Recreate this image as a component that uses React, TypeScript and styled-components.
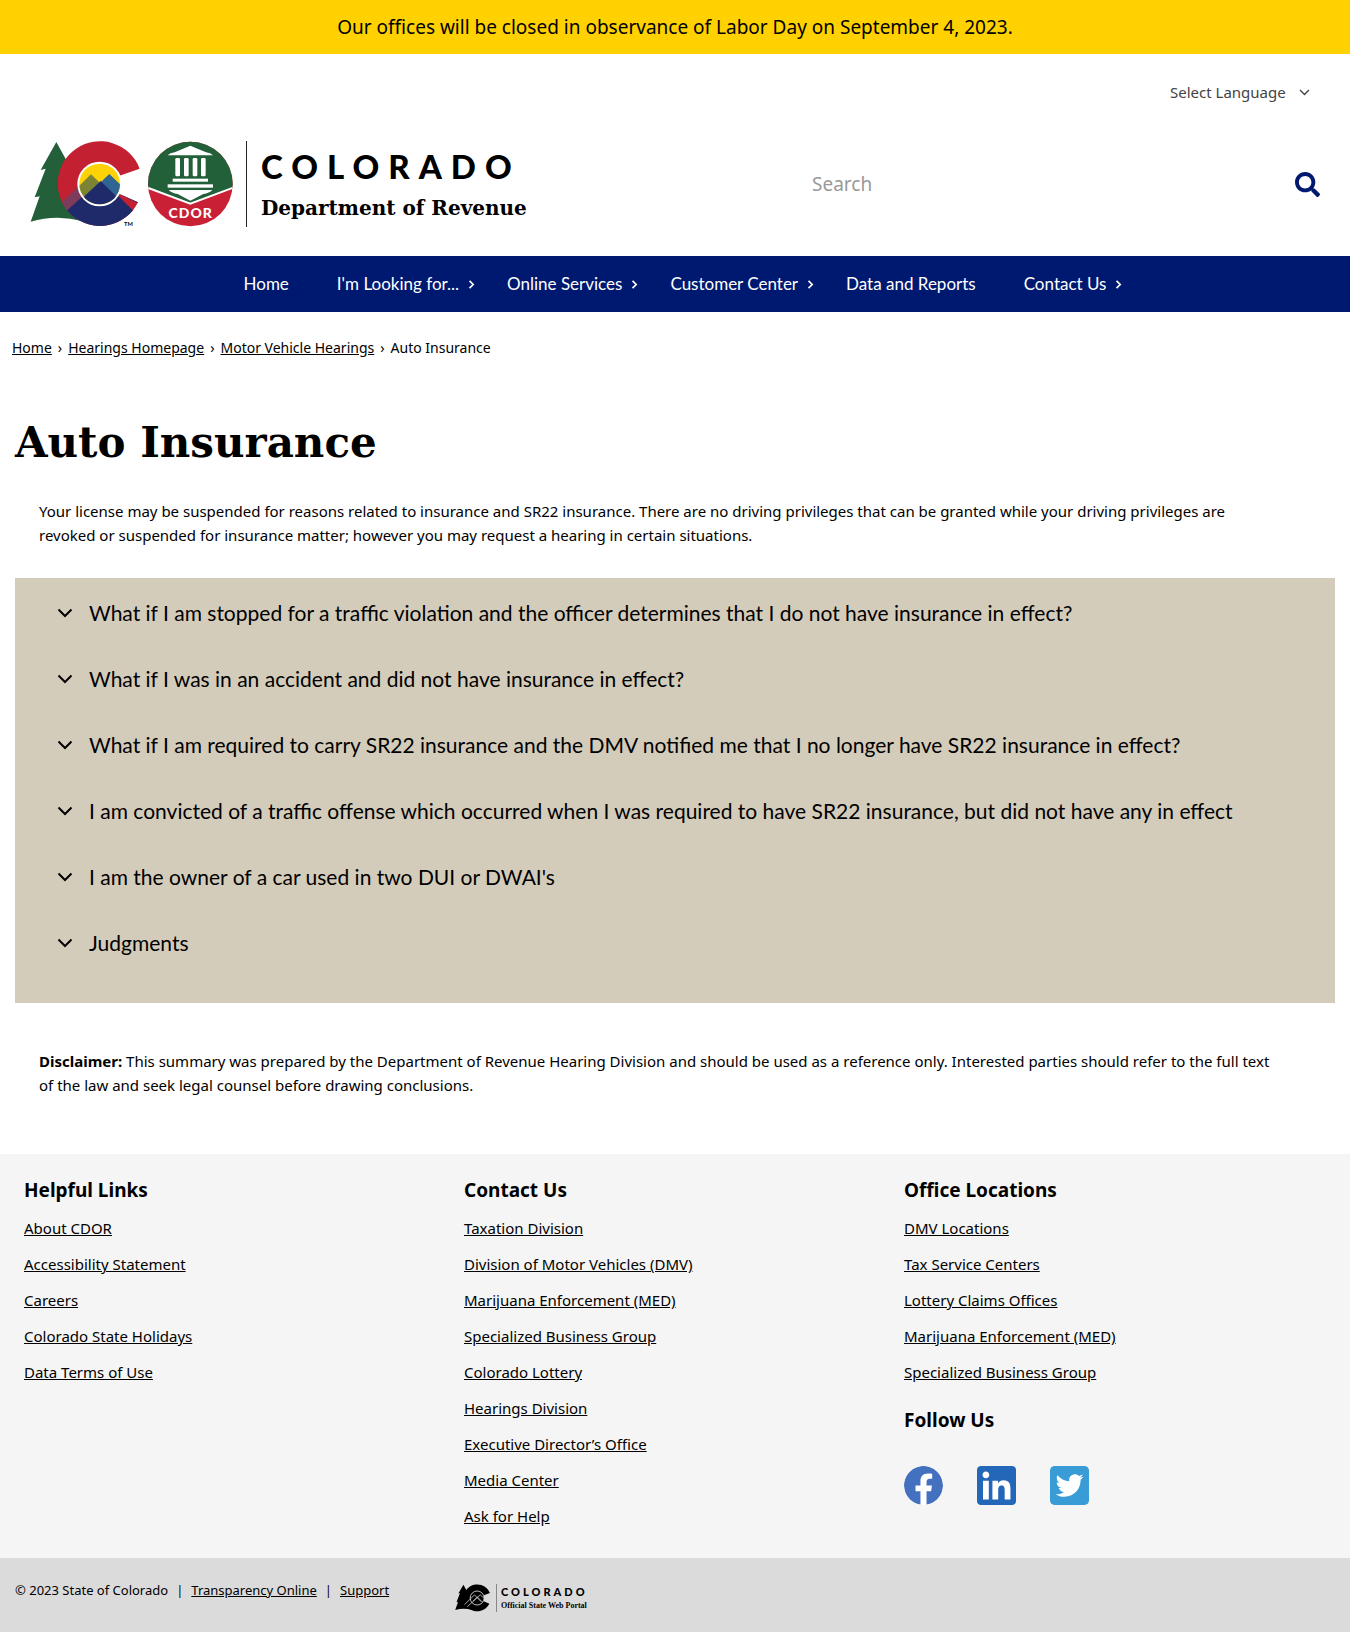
import React from 'react';
import styled, { createGlobalStyle } from 'styled-components';
import { FaFacebook, FaLinkedin, FaSearch, FaTwitterSquare } from 'react-icons/fa';

const body = `'Noto Sans', 'Open Sans', sans-serif`;
const museo = `Lato, 'Open Sans', sans-serif`;
const slab = `'DejaVu Serif', 'Liberation Serif', serif`;
const navy = '#001970';

const GlobalStyle = createGlobalStyle`
  *, *::before, *::after { box-sizing: border-box; }
  body { margin: 0; background: #fff; color: #000; font: 15px/24px ${body}; }
  h1, h2, p, ul, ol { margin: 0; padding: 0; }
  ul, ol { list-style: none; }
  a { color: inherit; }
  button { font: inherit; color: inherit; background: none; border: 0; padding: 0; cursor: pointer; }
`;

const Banner = styled.div`
  background: #ffd100;
  padding: 13px 16px;
  font-size: 19px;
  line-height: 28px;
  text-align: center;
`;

const Header = styled.header`
  padding: 27px 30px 29px;
`;

const LanguageRow = styled.div`
  display: flex;
  justify-content: flex-end;
  padding-right: 10px;
  margin-bottom: 38px;
`;

const LanguagePicker = styled.label`
  display: grid;
  align-items: center;
  justify-items: end;
  color: #444;

  & > * {
    grid-area: 1 / 1;
  }
  svg {
    pointer-events: none;
  }
`;

const LanguageSelect = styled.select`
  appearance: none;
  height: 22px;
  padding: 0 24px 0 0;
  border: 0;
  background: none;
  color: inherit;
  font: 15px/22px ${body};
`;

const BrandRow = styled.div`
  display: grid;
  grid-template-columns: 3fr 2fr;
  align-items: center;
`;

const Brand = styled.a`
  display: flex;
  align-items: stretch;
  gap: 12px;
  text-decoration: none;
`;

const BrandText = styled.span`
  display: flex;
  flex-direction: column;
  justify-content: center;
  gap: 8px;
  padding-left: 14px;
  border-left: 1px solid #222;
`;

const BrandState = styled.span`
  font: 900 33px/40px ${museo};
  letter-spacing: 9px;
`;

const BrandName = styled.span`
  font: 700 20px/28px ${slab};
`;

const SearchForm = styled.form`
  display: flex;
  align-items: center;
  padding-left: 8px;
`;

const SearchInput = styled.input`
  flex: 1;
  min-width: 0;
  height: 40px;
  padding: 0;
  border: 0;
  background: none;
  font: 19px/28px ${body};

  &::placeholder {
    color: #999;
    opacity: 1;
  }
`;

const SearchButton = styled.button`
  display: flex;
  && {
    color: ${navy};
    font-size: 25px;
  }
`;

const NavBar = styled.nav`
  background: ${navy};
`;

const NavList = styled.ul`
  display: flex;
  justify-content: center;
  flex-wrap: wrap;
`;

const NavLink = styled.a<{ $menu?: boolean }>`
  display: flex;
  align-items: center;
  gap: 8px;
  padding: 16px ${p => (p.$menu ? 7 : 24)}px 16px 24px;
  color: #fff;
  font: 17px/24px ${museo};
  text-decoration: none;
`;

const Breadcrumb = styled.ol`
  display: flex;
  flex-wrap: wrap;
  && {
    padding: 24px 12px 0;
  }
  font-size: 14px;

  li + li::before {
    content: '›';
    padding: 0 6px;
  }
`;

const Main = styled.main`
  padding: 53px 15px 57px;
`;

const Title = styled.h1`
  font: 700 42px/60px ${slab};
`;

const Copy = styled.p`
  && {
    margin: 26px 56px 0 24px;
  }
`;

const Disclaimer = styled(Copy)`
  && {
    margin-top: 46px;
  }
`;

const Accordion = styled.section`
  margin-top: 31px;
  padding: 2px 42px 27px;
  background: #d4ccba;
`;

const Question = styled.button`
  display: flex;
  align-items: center;
  gap: 16px;
  width: 100%;
  min-height: 66px;
  && {
    font: 21px/28px ${museo};
  }
  text-align: left;
`;

const FooterColumns = styled.div`
  display: grid;
  grid-template-columns: repeat(3, 1fr);
  padding: 22px 15px 24px;
  background: #f5f5f5;
`;

const FooterColumn = styled.div`
  padding: 0 9px;
`;

const FooterHeading = styled.h2<{ $spaced?: boolean }>`
  font-size: 19px;
  line-height: 28px;
  ${p => p.$spaced && '&& { margin-top: 16px; }'}
`;

const LinkList = styled.ul`
  && {
    margin-top: 6px;
  }
  line-height: 36px;
`;

const SocialList = styled.ul`
  display: flex;
  gap: 34px;
  && {
    margin-top: 32px;
  }
`;

const SocialLink = styled.a<{ $color: string; $round?: boolean }>`
  display: block;
  color: ${p => p.$color};

  svg {
    display: block;
    width: 39px;
    height: 39px;
    border-radius: ${p => (p.$round ? '50%' : '4px')};
    background: #fff;
  }
`;

const BottomBar = styled.div`
  display: grid;
  grid-template-columns: 1fr 2fr;
  padding: 20px 15px;
  background: #dbdbdb;
  font-size: 13px;
`;

const Legal = styled.p`
  display: flex;
  gap: 8px;
`;

const Portal = styled.a`
  display: flex;
  gap: 6px;
  justify-self: start;
  padding: 6px 0 0;
  text-decoration: none;
`;

const PortalText = styled.span`
  display: flex;
  flex-direction: column;
  padding-left: 4px;
  border-left: 1px solid #888;
`;

const PortalState = styled.span`
  font: 900 11px/16px ${museo};
  letter-spacing: 3px;
`;

const PortalName = styled.span`
  font: 700 8px/12px 'Liberation Serif', serif;
`;

function Chevron({ size, width = 2, direction = 'down' }: { size: number; width?: number; direction?: 'down' | 'right' }) {
  return (
    <svg width={size} height={size} viewBox="0 0 16 16" fill="none" stroke="currentColor" strokeWidth={width} aria-hidden="true">
      <path d={direction === 'down' ? 'M1.5 4.5 8 11l6.500-6.500' : 'M4.500 1.500 11 8l-6.500 6.500'} />
    </svg>
  );
}

const treePath = 'M109 24 L62 108 L77 104 L44 190 L59 187 L32 263 Q110 240 190 262 L200 160 L142 84 Z';
const letterPath = 'M359 104 A127 127 0 1 0 354 205 L290 176 V128 Z';

function ColorLogo() {
  return (
    <svg width="204" height="86" viewBox="30 21 612 258" aria-hidden="true">
      <defs>
        <clipPath id="letter"><path d={letterPath} /></clipPath>
        <clipPath id="sun"><circle cx="239" cy="150" r="61" /></clipPath>
        <clipPath id="seal"><circle cx="511" cy="150" r="127" /></clipPath>
      </defs>
      <path d={treePath} fill="#235f38" />
      <g clipPath="url(#letter)">
        <rect x="110" y="20" width="260" height="260" fill="#c32032" />
        <path d="M100 228 L213 122 L245 140 L146 228 L160 290 Z" fill="#7d3c5c" />
        <path d="M140 230 L245 136 L400 290 L150 290 Z" fill="#1f2a6b" />
        <path d="M290 150 H370 V215 L290 176 Z" fill="#1f2a6b" />
      </g>
      <circle cx="239" cy="150" r="67" fill="#fff" />
      <g clipPath="url(#sun)">
        <rect x="170" y="80" width="140" height="140" fill="#fdd207" />
        <path d="M150 182 L213 121 L280 185 L200 230 Z" fill="#7c8434" />
        <path d="M220 166 L268 120 L320 170 L300 210 Z" fill="#2f6493" />
        <path d="M160 218 L242 141 L320 218 V230 H160 Z" fill="#1f2a6b" />
      </g>
      <text x="312" y="275" fontFamily="Lato, sans-serif" fontSize="17" fontWeight="700">TM</text>
      <g clipPath="url(#seal)">
        <rect x="380" y="20" width="262" height="262" fill="#c92035" />
        <path d="M380 20 H642 V160 L511 209 L380 160 Z" fill="#22603a" />
        <path d="M380 160 L511 209 L642 160" fill="none" stroke="#fff" strokeWidth="6" />
      </g>
      <g fill="#fff">
        <path d="M443 64 Q450 57 464 55 L511 35 L558 55 Q572 57 579 64 Z" />
        <rect x="466" y="72" width="14" height="55" rx="4" />
        <rect x="492" y="72" width="14" height="55" rx="4" />
        <rect x="518" y="72" width="14" height="55" rx="4" />
        <rect x="543" y="72" width="14" height="55" rx="4" />
        <rect x="458" y="134" width="106" height="9" />
        <rect x="443" y="151" width="136" height="10" />
        <path d="M446 168 H577 Q568 177 550 180 L511 200 L473 180 Q455 177 446 168 Z" />
        <text x="512" y="251" textAnchor="middle" fontFamily="Lato, sans-serif" fontSize="42" fontWeight="900" letterSpacing="3">CDOR</text>
      </g>
    </svg>
  );
}

function MonoLogo() {
  return (
    <svg width="35" height="28" viewBox="30 20 330 260" aria-hidden="true">
      <path d={treePath} />
      <path d={letterPath} />
      <circle cx="239" cy="150" r="66" stroke="#dbdbdb" strokeWidth="8" />
      <path d="M120 212 L213 121 L278 186 M146 232 L268 120 L302 152 M200 180 L242 141 L286 186" fill="none" stroke="#dbdbdb" strokeWidth="7" />
    </svg>
  );
}

const navItems = [
  { label: 'Home' },
  { label: "I'm Looking for...", menu: true },
  { label: 'Online Services', menu: true },
  { label: 'Customer Center', menu: true },
  { label: 'Data and Reports' },
  { label: 'Contact Us', menu: true },
];

const questions = [
  'What if I am stopped for a traffic violation and the officer determines that I do not have insurance in effect?',
  'What if I was in an accident and did not have insurance in effect?',
  'What if I am required to carry SR22 insurance and the DMV notified me that I no longer have SR22 insurance in effect?',
  'I am convicted of a traffic offense which occurred when I was required to have SR22 insurance, but did not have any in effect',
  "I am the owner of a car used in two DUI or DWAI's",
  'Judgments',
];

const helpful = ['About CDOR', 'Accessibility Statement', 'Careers', 'Colorado State Holidays', 'Data Terms of Use'];
const contact = [
  'Taxation Division',
  'Division of Motor Vehicles (DMV)',
  'Marijuana Enforcement (MED)',
  'Specialized Business Group',
  'Colorado Lottery',
  'Hearings Division',
  'Executive Director’s Office',
  'Media Center',
  'Ask for Help',
];
const offices = [
  'DMV Locations',
  'Tax Service Centers',
  'Lottery Claims Offices',
  'Marijuana Enforcement (MED)',
  'Specialized Business Group',
];

function Links({ items }: { items: string[] }) {
  return (
    <LinkList>
      {items.map(item => (
        <li key={item}><a href="#">{item}</a></li>
      ))}
    </LinkList>
  );
}

export default function App() {
  return (
    <>
      <GlobalStyle />
      <Banner>Our offices will be closed in observance of Labor Day on September 4, 2023.</Banner>
      <Header>
        <LanguageRow>
          <LanguagePicker>
            <LanguageSelect aria-label="Select Language">
              <option>Select Language</option>
            </LanguageSelect>
            <Chevron size={11} width={2} />
          </LanguagePicker>
        </LanguageRow>
        <BrandRow>
          <Brand href="#">
            <ColorLogo />
            <BrandText>
              <BrandState>COLORADO</BrandState>
              <BrandName>Department of Revenue</BrandName>
            </BrandText>
          </Brand>
          <SearchForm role="search" onSubmit={e => e.preventDefault()}>
            <SearchInput type="text" placeholder="Search" aria-label="Search" />
            <SearchButton type="submit" aria-label="Submit search"><FaSearch /></SearchButton>
          </SearchForm>
        </BrandRow>
      </Header>
      <NavBar>
        <NavList>
          {navItems.map(({ label, menu }) => (
            <li key={label}>
              <NavLink href="#" $menu={menu}>
                {label}
                {menu && <Chevron size={9} width={3} direction="right" />}
              </NavLink>
            </li>
          ))}
        </NavList>
      </NavBar>
      <Breadcrumb>
        <li><a href="#">Home</a></li>
        <li><a href="#">Hearings Homepage</a></li>
        <li><a href="#">Motor Vehicle Hearings</a></li>
        <li>Auto Insurance</li>
      </Breadcrumb>
      <Main>
        <Title>Auto Insurance</Title>
        <Copy>
          Your license may be suspended for reasons related to insurance and SR22 insurance. There are no driving
          privileges that can be granted while your driving privileges are revoked or suspended for insurance matter;
          however you may request a hearing in certain situations.
        </Copy>
        <Accordion>
          {questions.map(question => (
            <Question key={question} type="button" aria-expanded={false}>
              <Chevron size={16} />
              {question}
            </Question>
          ))}
        </Accordion>
        <Disclaimer>
          <strong>Disclaimer:</strong> This summary was prepared by the Department of Revenue Hearing Division and
          should be used as a reference only. Interested parties should refer to the full text of the law and seek
          legal counsel before drawing conclusions.
        </Disclaimer>
      </Main>
      <footer>
        <FooterColumns>
          <FooterColumn>
            <FooterHeading>Helpful Links</FooterHeading>
            <Links items={helpful} />
          </FooterColumn>
          <FooterColumn>
            <FooterHeading>Contact Us</FooterHeading>
            <Links items={contact} />
          </FooterColumn>
          <FooterColumn>
            <FooterHeading>Office Locations</FooterHeading>
            <Links items={offices} />
            <FooterHeading $spaced>Follow Us</FooterHeading>
            <SocialList>
              <li><SocialLink href="#" aria-label="Facebook" $color="#4470c0" $round><FaFacebook viewBox="8 8 496 496" /></SocialLink></li>
              <li><SocialLink href="#" aria-label="LinkedIn" $color="#2367b8"><FaLinkedin viewBox="0 32 448 448" /></SocialLink></li>
              <li><SocialLink href="#" aria-label="Twitter" $color="#3a9cd6"><FaTwitterSquare viewBox="0 32 448 448" /></SocialLink></li>
            </SocialList>
          </FooterColumn>
        </FooterColumns>
        <BottomBar>
          <Legal>
            <span>© 2023 State of Colorado</span>
            <span>|</span>
            <a href="#">Transparency Online</a>
            <span>|</span>
            <a href="#">Support</a>
          </Legal>
          <Portal href="#">
            <MonoLogo />
            <PortalText>
              <PortalState>COLORADO</PortalState>
              <PortalName>Official State Web Portal</PortalName>
            </PortalText>
          </Portal>
        </BottomBar>
      </footer>
    </>
  );
}
